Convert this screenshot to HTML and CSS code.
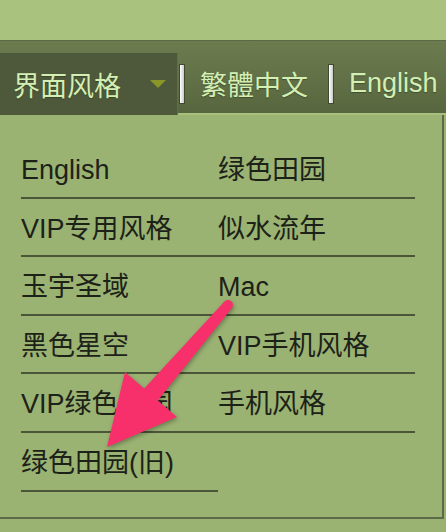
FILE: index.html
```html
<!DOCTYPE html>
<html lang="zh-CN">
<head>
    <meta charset="UTF-8" />
    <title>界面风格</title>
    <link rel="stylesheet" href="styles.css">
</head>
<body>
    <div class="top"></div>

    <nav class="navbar">
        <div class="tab tab-active">
            <span>界面风格</span>
            <span class="caret"></span>
        </div>
        <span class="sep"></span>
        <a class="tab tab-text tab-hant" href="#">繁體中文</a>
        <span class="sep"></span>
        <a class="tab tab-text" href="#">English</a>
    </nav>

    <div class="menu">
        <ul class="styles">
            <li>English</li>
            <li>绿色田园</li>
            <li>VIP专用风格</li>
            <li>似水流年</li>
            <li>玉宇圣域</li>
            <li>Mac</li>
            <li>黑色星空</li>
            <li>VIP手机风格</li>
            <li>VIP绿色田园</li>
            <li>手机风格</li>
            <li>绿色田园(旧)</li>
        </ul>
    </div>

    <!-- annotation arrow -->
    <svg class="arrow" width="446" height="532" viewBox="0 0 446 532">
        <circle cx="228" cy="305" r="5" fill="#f72f6b" />
        <polygon fill="#f72f6b"
            points="224.2,301.7 231.8,308.3 157.8,400.4 177,417 107,447 125,372 144.2,388.6" />
    </svg>
</body>
</html>
```

FILE: styles.css
```css
html {
    background: #9ab373;
}

body {
    margin: 0;
    font-family: "Liberation Sans", "Noto Sans CJK SC", sans-serif;
    position: relative;
}

.top {
    height: 40px;
    background: #a9c37e;
}

.navbar {
    display: flex;
    align-items: flex-end;
    height: 72px;
    border-top: 1px solid #5b6a45;
    border-bottom: 2px solid #a7c07b;
    background: linear-gradient(#6c7c4f, #58663f);
    white-space: nowrap;
}

.tab {
    display: flex;
    flex-shrink: 0;
    align-items: center;
    box-sizing: border-box;
    font-size: 27px;
    color: #d4efb4;
    text-decoration: none;
    text-shadow: 0 1px 1px rgba(40, 50, 25, 0.5);
}

.tab-active {
    width: 178px;
    height: 62px;
    margin-bottom: -2px;
    padding: 1px 0 0 13px;
    background: #4e593b;
    border-right: 1px solid #606e49;
}

.caret {
    margin-left: 29px;
    margin-top: -2px;
    border-left: 8px solid transparent;
    border-right: 8px solid transparent;
    border-top: 8px solid #8b9628;
}

.tab-text {
    height: 60px;
    padding: 1px 15px 0;
}

.tab-hant {
    padding-right: 19px;
}

.sep {
    flex-shrink: 0;
    width: 4px;
    height: 38px;
    margin: 0 0 9px 1px;
    border: 1px solid #3f4a2e;
    background: linear-gradient(90deg, #ffffff, #c9c9c9);
}

.menu {
    width: 421px;
    height: 377px;
    padding: 25px 0 0 21px;
    background: #9ab373;
    border-right: 2px solid #5d6a47;
    border-bottom: 2px solid #5d6a47;
}

.styles {
    display: grid;
    grid-template-columns: 197px 197px;
    margin: 0;
    padding: 0;
    list-style: none;
}

.styles li {
    height: 58.6px;
    box-sizing: border-box;
    padding-top: 17px;
    font-size: 27px;
    line-height: 27px;
    color: #1d2218;
    border-bottom: 2px solid #4b5639;
}

.arrow {
    position: absolute;
    left: 0;
    top: 0;
    filter: drop-shadow(1px 2px 2px rgba(0, 0, 0, 0.3));
}
```
